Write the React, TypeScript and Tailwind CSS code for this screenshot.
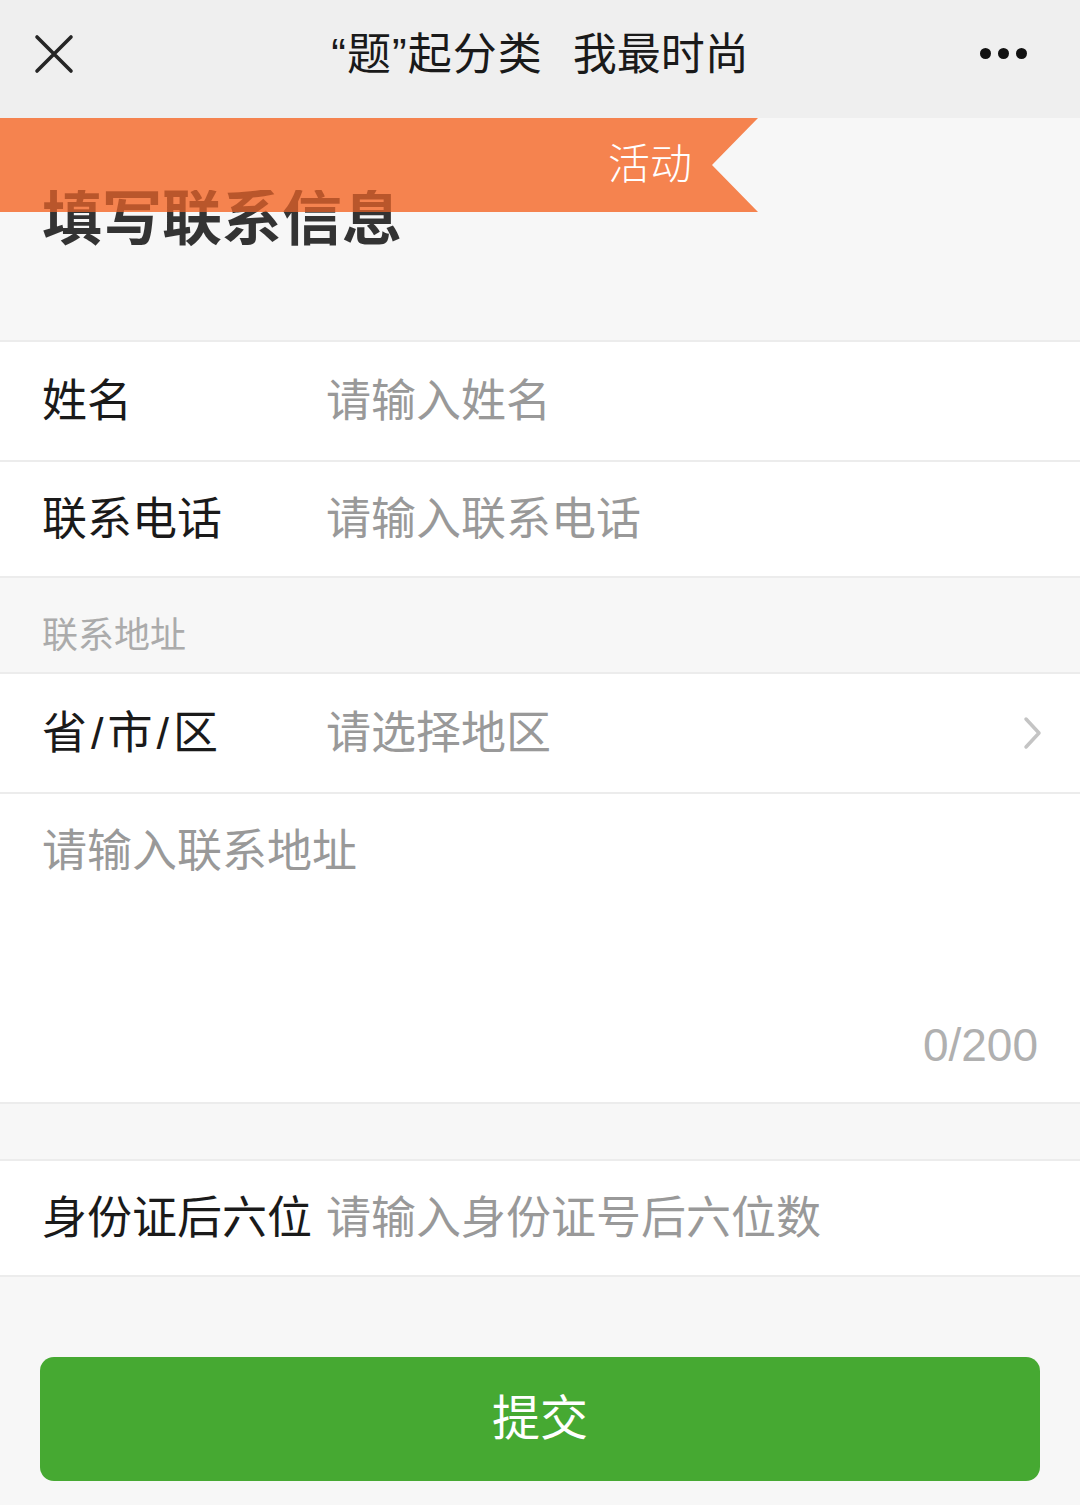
import React from 'react'

const font = { fontFamily: '"Liberation Sans", "Noto Sans CJK SC", sans-serif' }

function Row({ label, placeholder, chevron, h }: { label: React.ReactNode; placeholder: string; chevron?: boolean; h: number }) {
  return (
    <div className="flex items-center bg-white border-b-2 border-[#ececec] pl-[42px] pr-[36px]" style={{ height: h }}>
      <div className="w-[284px] shrink-0 text-[45px] text-[#1a1a1a] leading-none">{label}</div>
      <div className="flex-1 text-[45px] text-[#999999] leading-none">{placeholder}</div>
      {chevron && (
        <svg width="22" height="34" viewBox="0 0 22 34" className="shrink-0">
          <polyline points="4,3 17,17 4,31" fill="none" stroke="#c4c4c4" strokeWidth="3.5" strokeLinecap="round" strokeLinejoin="round" />
        </svg>
      )}
    </div>
  )
}

export default function App() {
  return (
    <div className="w-[1080px] min-h-[1505px] bg-[#f7f7f7]" style={font}>
      {/* top bar */}
      <header className="h-[118px] bg-[#efefef] flex items-center relative">
        <svg width="40" height="40" viewBox="0 0 40 40" className="absolute left-[34px] top-[34px]">
          <path d="M3 3 L37 37 M37 3 L3 37" stroke="#262626" strokeWidth="3.6" strokeLinecap="round" />
        </svg>
        <div className="w-full flex justify-center items-center text-[44px] text-[#1a1a1a] leading-none pb-[8px]">
          <span className="tracking-[1px]">“题”起分类</span>
          <span className="ml-[30px]">我最时尚</span>
        </div>
        <div className="absolute left-[980px] top-[48px] flex gap-[7px]">
          <span className="w-[11px] h-[11px] rounded-full bg-[#111]" />
          <span className="w-[11px] h-[11px] rounded-full bg-[#111]" />
          <span className="w-[11px] h-[11px] rounded-full bg-[#111]" />
        </div>
      </header>

      {/* banner + title */}
      <div className="h-[224px] border-b-2 border-[#ececec]">
        <div
          className="h-[94px] w-[758px] bg-[#f5834f] flex items-center justify-end pr-[66px]"
          style={{ clipPath: 'polygon(0 0, 100% 0, calc(100% - 46px) 50%, 100% 100%, 0 100%)' }}
        >
          <span className="text-[42px] text-white font-light leading-none">活动</span>
        </div>
        <h1
          className="relative -mt-[22px] ml-[42px] text-[60px] font-bold leading-[60px] bg-[linear-gradient(to_bottom,#b9562b_0,#b9562b_22px,#333333_22px,#333333_100%)] bg-clip-text text-transparent inline-block"
        >
          填写联系信息
        </h1>
      </div>

      <Row h={120} label="姓名" placeholder="请输入姓名" />
      <Row h={116} label="联系电话" placeholder="请输入联系电话" />

      <div className="h-[96px] flex items-center pl-[42px] border-b-2 border-[#ececec] pt-[22px]">
        <span className="text-[36px] text-[#ababab] leading-none">联系地址</span>
      </div>

      <Row
        h={120}
        label={
          <>
            省<span className="mx-[4px]">/</span>市<span className="mx-[4px]">/</span>区
          </>
        }
        placeholder="请选择地区"
        chevron
      />

      <div className="h-[310px] bg-white border-b-2 border-[#ececec] flex flex-col justify-between pl-[42px] pr-[42px] pt-[35px] pb-[34px]">
        <div className="text-[45px] text-[#999999] leading-none">请输入联系地址</div>
        <div className="text-right text-[46px] text-[#b0b0b0] leading-none">0/200</div>
      </div>

      <div className="h-[57px] border-b-2 border-[#ececec]" />

      <Row h={116} label="身份证后六位" placeholder="请输入身份证号后六位数" />

      <div className="pt-[80px] px-[40px] pb-[24px]">
        <button className="w-full h-[124px] rounded-[14px] bg-[#46a932] text-white text-[48px] leading-none flex items-center justify-center">
          提交
        </button>
      </div>
    </div>
  )
}
